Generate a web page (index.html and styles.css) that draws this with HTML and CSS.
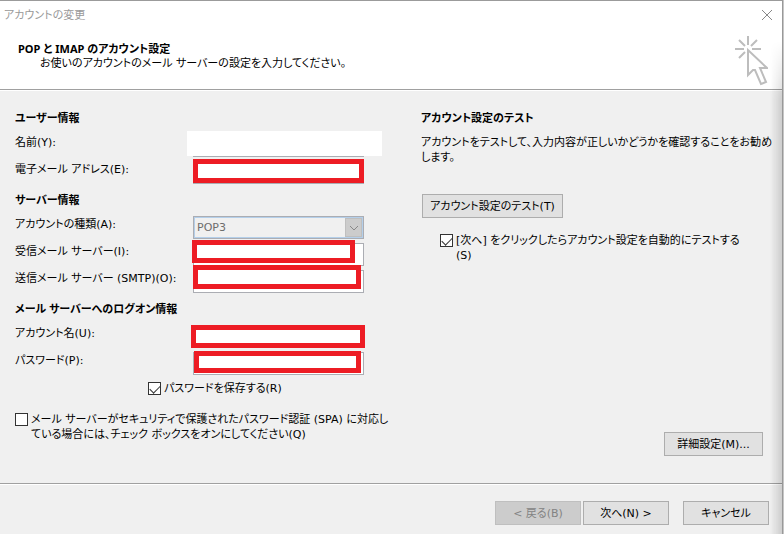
FILE: index.html
```html
<!DOCTYPE html>
<html lang="ja">
<head>
<meta charset="utf-8">
<meta name="viewport" content="width=device-width, initial-scale=1">
<title>アカウントの変更</title>
<link rel="stylesheet" href="styles.css">
</head>
<body>
<main class="dialog">
  <header class="top">
    <div class="titlebar">
      <span class="caption">アカウントの変更</span>
      <button class="close" type="button" aria-label="閉じる"><svg width="12" height="12" viewBox="0 0 12 12"><path d="M1 1l10 10M11 1L1 11"/></svg></button>
    </div>
    <div class="banner">
      <div>
        <h1>POP と IMAP のアカウント設定</h1>
        <p class="lead">お使いのアカウントのメール サーバーの設定を入力してください。</p>
      </div>
      <svg class="pointer" width="34" height="51" viewBox="0 0 34 51"><path d="M1 14h9M18 14h9M14 1v9M5 5l6 6M23 5l-6 6M5 23l6-6M14 15v25l5-5h2l6 14 5-2-6-14h7z"/></svg>
    </div>
  </header>
  <form class="content">
    <div class="settings">
      <section>
        <h2>ユーザー情報</h2>
        <div class="row"><label for="name">名前(Y):</label><div class="field"><input id="name" type="text"><i class="blank"></i></div></div>
        <div class="row"><label for="mail">電子メール アドレス(E):</label><div class="field"><input id="mail" type="text"><i class="mark mark-mail"></i></div></div>
      </section>
      <section>
        <h2>サーバー情報</h2>
        <div class="row"><label for="kind">アカウントの種類(A):</label><div class="field"><select id="kind" disabled><option>POP3</option></select><span class="arrow"><svg width="10" height="6" viewBox="0 0 10 6"><path d="M1 1l4 4 4-4"/></svg></span></div></div>
        <div class="row"><label for="incoming">受信メール サーバー(I):</label><div class="field"><input id="incoming" type="text"><i class="mark mark-incoming"></i></div></div>
        <div class="row"><label for="outgoing">送信メール サーバー (SMTP)(O):</label><div class="field"><input id="outgoing" type="text"><i class="mark mark-outgoing"></i></div></div>
      </section>
      <section>
        <h2>メール サーバーへのログオン情報</h2>
        <div class="row"><label for="user">アカウント名(U):</label><div class="field"><input id="user" type="text"><i class="mark mark-user"></i></div></div>
        <div class="row"><label for="pass">パスワード(P):</label><div class="field"><input id="pass" type="password"><i class="mark mark-pass"></i></div></div>
      </section>
      <label class="check save"><input type="checkbox" checked><span>パスワードを保存する(R)</span></label>
      <label class="check spa"><input type="checkbox"><span>メール サーバーがセキュリティで保護されたパスワード認証 (SPA) に対応し<br>ている場合には、チェック ボックスをオンにしてください(Q)</span></label>
    </div>
    <div class="test">
      <h2>アカウント設定のテスト</h2>
      <p>アカウントをテストして、入力内容が正しいかどうかを確認することをお勧め<br>します。</p>
      <button class="btn run" type="button">アカウント設定のテスト(T)</button>
      <label class="check auto"><input type="checkbox" checked><span>[次へ] をクリックしたらアカウント設定を自動的にテストする<br>(S)</span></label>
      <button class="btn more" type="button">詳細設定(M)...</button>
    </div>
  </form>
  <footer class="actions">
    <button class="btn" type="button" disabled>&lt; 戻る(B)</button>
    <button class="btn" type="button">次へ(N) &gt;</button>
    <button class="btn cancel" type="button">キャンセル</button>
  </footer>
</main>
</body>
</html>
```
FILE: styles.css
```css
* { box-sizing: border-box; }
body {
  margin: 0;
  background: #c6c6c6;
  color: #000;
  font: 11px/15px "DejaVu Sans", "Noto Sans CJK JP", sans-serif;
  font-feature-settings: "palt";
}
button, input, select { font: inherit; font-feature-settings: inherit; color: inherit; }
h1, h2, p { margin: 0; font-size: 11px; }
h1, h2 { font-family: "Noto Sans", "Noto Sans CJK JP", sans-serif; }
.dialog {
  position: relative;
  display: flex;
  flex-direction: column;
  min-height: 100vh;
  margin-right: 1px;
  border-top: 1px solid #9b9b9b;
  border-right: 1px solid #999;
  background: #f0f0f0;
  white-space: nowrap;
}
.dialog::after {
  content: "";
  position: absolute;
  inset: 40px 0 0 auto;
  width: 12px;
  background: linear-gradient(to right, transparent, rgba(0, 0, 0, .14));
  mask-image: linear-gradient(transparent, #000 60px);
  pointer-events: none;
}
.top { background: #fff; border-bottom: 1px solid #a0a0a0; }
.titlebar { display: flex; justify-content: space-between; align-items: center; height: 28px; padding: 0 8px 0 4px; }
.caption { color: #999; }
.close { display: flex; padding: 1px; border: 0; background: none; }
svg { fill: none; stroke: #888; }
.banner { display: flex; justify-content: space-between; padding: 6px 14px 3px 18px; }
.banner h1 { padding-top: 6px; }
.lead { padding-left: 22px; }
.pointer { stroke: #bdbdbd; stroke-width: 2; }
.content {
  flex: 1;
  display: grid;
  grid-template-columns: 367px minmax(0, 1fr);
  column-gap: 39px;
  padding: 19px 19px 27px 15px;
  border-top: 1px solid #fff;
}
h2 { line-height: 16px; margin-bottom: 4px; }
section { margin-bottom: 8px; }
.row { display: grid; grid-template-columns: 178px 171px; height: 27px; }
.row label { padding-top: 5px; }
.field { position: relative; align-self: end; height: 23px; }
.field input, .field select {
  display: block;
  width: 100%;
  height: 23px;
  padding: 0 8px;
  border: 1px solid #abadb3;
  border-radius: 0;
  background: #fff;
}
.field select {
  appearance: none;
  background: #f0f0f0;
  color: #6d6d6d;
  opacity: 1;
  padding: 0 3px;
  box-shadow: inset 0 0 0 1px #b4cfea;
}
.arrow {
  position: absolute;
  inset: 2px 2px 2px auto;
  display: grid;
  place-items: center;
  width: 17px;
  border: 1px solid #bfbfbf;
  background: #ccc;
}
.blank { position: absolute; inset: -3px -18px 1px -6px; background: #fff; }
.mark { position: absolute; border: 5px solid #ed1c24; background: #fff; }
.mark-mail { inset: -2px 0 1px 0; }
.mark-incoming { inset: -3px 9px 3px -1px; }
.mark-outgoing { inset: -5px 3px 4px 0; }
.mark-user { inset: 0 -1px 0 -2px; }
.mark-pass { inset: -1px 3px 2px 1px; }
.check { display: flex; align-items: flex-start; gap: 3px; }
.check input {
  appearance: none;
  flex: none;
  width: 13px;
  height: 13px;
  margin: 1px 0 0;
  border: 1px solid #333;
  background: #fff;
}
.check input:checked::before {
  content: "";
  display: block;
  width: 9px;
  height: 5px;
  margin: 2px 1px;
  border: solid #333;
  border-width: 0 0 1px 1px;
  transform: rotate(-45deg);
}
.save { margin: -2px 0 0 133px; }
.spa { margin-top: 16px; }
.test { display: flex; flex-direction: column; align-items: flex-start; }
.test p { padding-top: 5px; }
.btn {
  min-width: 86px;
  height: 24px;
  padding: 0 4px;
  border: 1px solid #adadad;
  background: #e1e1e1;
}
.btn:disabled { border-color: #bfbfbf; background: #ccc; color: #838383; }
.run { min-width: 141px; margin: 29px 0 15px 1px; }
.auto { margin-left: 19px; }
.more { min-width: 99px; margin: auto 0 0; align-self: flex-end; }
.actions {
  display: flex;
  justify-content: flex-end;
  gap: 2px;
  padding: 17px 13px 9px;
  border-top: 1px solid #a0a0a0;
  box-shadow: inset 0 1px #fff;
}
.cancel { margin-left: 12px; }
```
